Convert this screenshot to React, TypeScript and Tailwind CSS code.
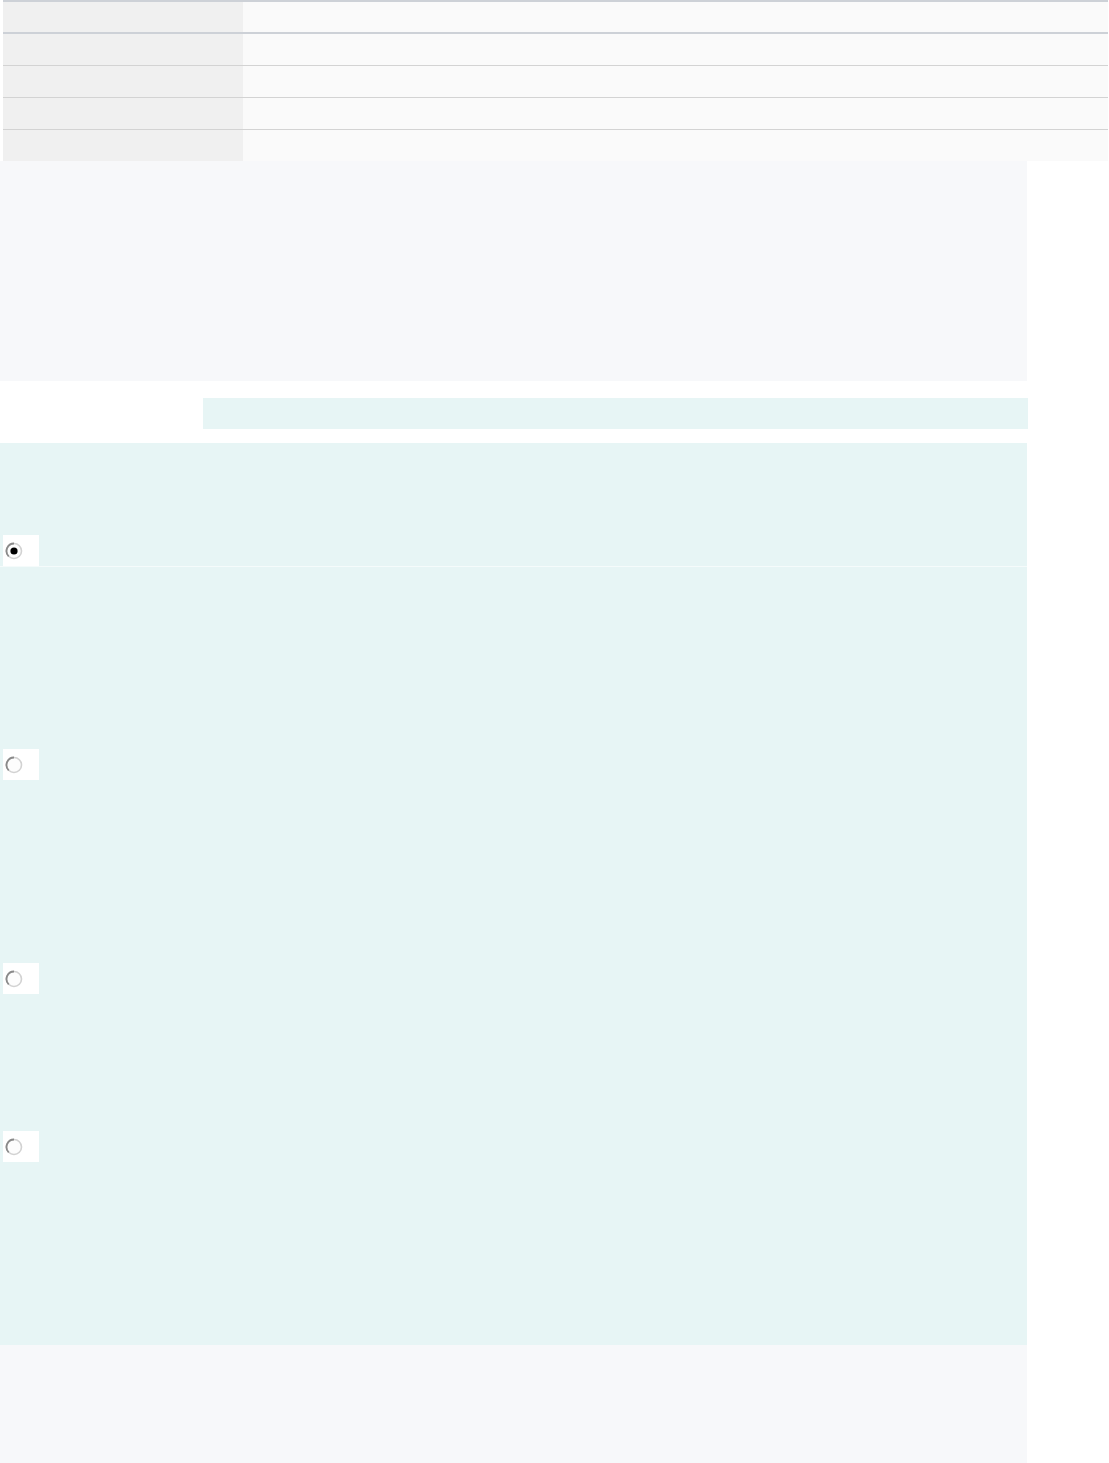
import React from "react";

const rows = [0, 1, 2, 3, 4];

const Radio: React.FC<{ checked?: boolean }> = ({ checked }) => (
  <div className="w-[36px] h-[31px] bg-white flex items-center pl-[2px]">
    <svg width="18" height="18" viewBox="0 0 18 18">
      <circle cx="9" cy="9" r="7.5" fill="#fdfdfd" stroke="#d2d2d2" strokeWidth="1.6" />
      <path d="M9 1.5 A7.5 7.5 0 0 0 3.7 14.3" fill="none" stroke="#8a8a8a" strokeWidth="1.8" />
      {checked && <circle cx="9" cy="9" r="3.6" fill="#000" />}
    </svg>
  </div>
);

const Section: React.FC<{ height: string; checked?: boolean; divider?: boolean }> = ({
  height,
  checked,
  divider,
}) => (
  <div className={`flex flex-col justify-end ${height} ${divider ? "border-b border-[#f5fbfb]" : ""}`}>
    <div className="pl-[3px]">
      <Radio checked={checked} />
    </div>
  </div>
);

export default function App() {
  return (
    <div className="w-[1109px] min-h-[1463px] bg-white font-['Liberation_Sans',sans-serif]">
      <div className="pl-[3px] pr-[1px]">
        <div className="border-t-2 border-[#cdd1d7]">
          {rows.map((r) => (
            <div
              key={r}
              className={`flex ${
                r === 0
                  ? "h-[32px] border-b-2 border-[#cdd1d7]"
                  : r < 4
                  ? "h-[32px] border-b border-[#d3d3d3]"
                  : "h-[31px]"
              }`}
            >
              <div className="w-[240px] bg-[#f0f0f0]" />
              <div className="flex-1 bg-[#fafafa]" />
            </div>
          ))}
        </div>
      </div>

      <div className="w-[1027px] h-[220px] bg-[#f7f8fa]" />

      <div className="h-[17px]" />
      <div className="pl-[203px]">
        <div className="w-[825px] h-[31px] bg-[#e7f5f5]" />
      </div>
      <div className="h-[14px]" />

      <div className="w-[1027px] h-[902px] bg-[#e7f5f5] flex flex-col">
        <Section height="h-[124px]" checked divider />
        <Section height="h-[213px]" />
        <Section height="h-[214px]" />
        <Section height="h-[168px]" />
      </div>

      <div className="w-[1027px] h-[118px] bg-[#f7f8fa]" />
    </div>
  );
}
